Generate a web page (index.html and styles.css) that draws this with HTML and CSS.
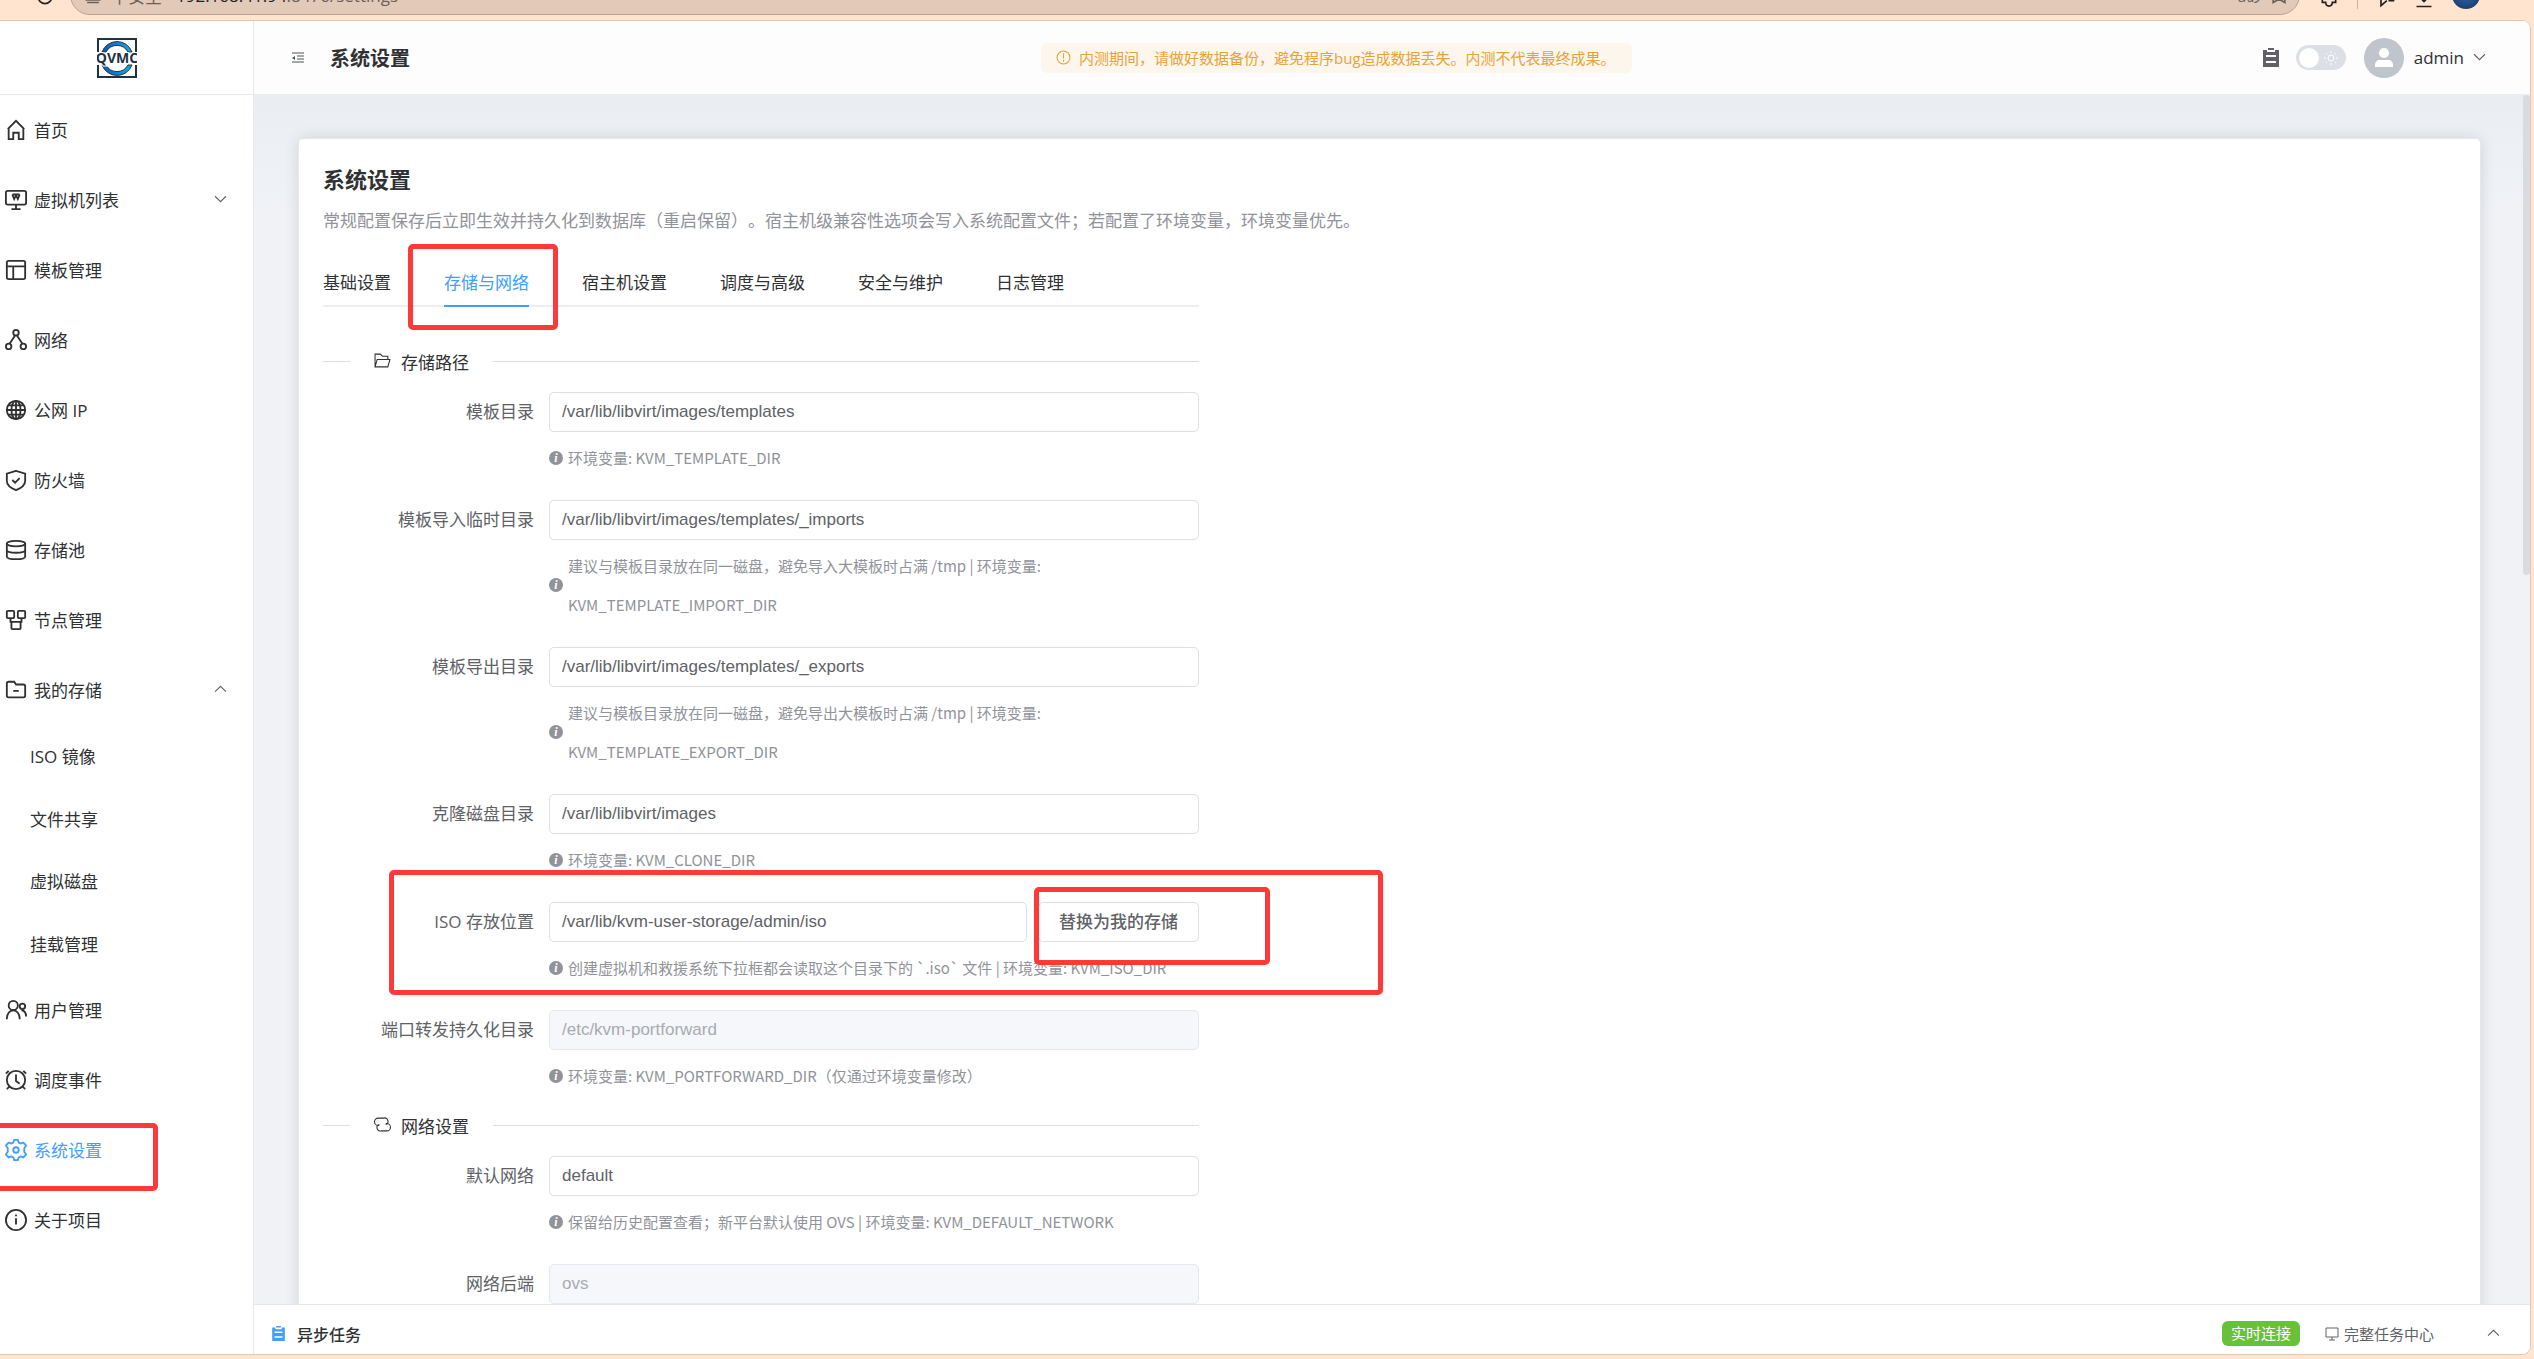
FILE: index.html
```html
<!DOCTYPE html>
<html lang="zh-CN">
<head>
    <meta charset="UTF-8">
    <title>系统设置</title>
    <link rel="stylesheet" href="styles.css">
</head>
<body>
    <div class="browser-bar">
        <svg class="bar-icon reload" viewBox="0 0 24 24"><circle cx="12" cy="12" r="8"/></svg>
        <div class="address">
            <svg class="bar-icon warn" viewBox="0 0 24 24"><path d="M3 18h18M5 21h14"/></svg>
            <span class="unsafe">不安全</span>
            <span class="url">192.168.41.94<span class="path">:8476/settings</span></span>
            <span class="aloud">aあ</span>
            <svg class="bar-icon star" viewBox="0 0 24 24"><path d="M5 9v12l7-4 7 4V9"/></svg>
        </div>
        <div class="bar-tools">
            <svg class="bar-icon" viewBox="0 0 24 24"><path d="M4 8v8h4c0 6 8 6 8 0h4V8"/></svg>
            <span class="bar-line"></span>
            <svg class="bar-icon" viewBox="0 0 24 24"><path d="M6 8v12l7-6M15 14h7"/></svg>
            <svg class="bar-icon" viewBox="0 0 24 24"><path d="M12 3v12M8 11l4 4 4-4M3 21h18"/></svg>
            <span class="profile-pic"></span>
        </div>
    </div>

    <div class="app">
        <aside class="sidebar">
            <div class="logo">
                <svg viewBox="0 0 40 40" width="40" height="40">
                    <defs>
                        <linearGradient id="ring" x1="0" x2="1"><stop offset="0" stop-color="#0a56bd"/><stop offset="1" stop-color="#0bb0f0"/></linearGradient>
                    </defs>
                    <path d="M1 14V1h38v13M1 27v12h38V27" fill="none" stroke="#1d3446" stroke-width="2"/>
                    <path d="M5 14A16 16 0 0 1 35 14L31 14A12.500 12.500 0 0 0 9 14zM5 27A16 16 0 0 0 35 27L31 27A12.500 12.500 0 0 1 9 27z" fill="url(#ring)"/>
                    <text x="20" y="25" text-anchor="middle" class="logo-text">QVMC</text>
                </svg>
            </div>
            <nav class="menu">
                <a class="menu-item" href="#">
                    <svg class="icon" viewBox="0 0 24 24"><path d="M3 11 12 2l9 9M4 10v12h5v-7h6v7h5V10"/></svg>首页
                </a>
                <a class="menu-item" href="#">
                    <svg class="icon" viewBox="0 0 24 24"><rect x="1" y="2" width="22" height="15" rx="2"/><path d="M12 17v5M7 22h10M8 6l2 5 2-4 2 4 2-5M8 6h8"/></svg>虚拟机列表
                    <svg class="arrow" viewBox="0 0 12 12"><path d="M1 3l5 5 5-5"/></svg>
                </a>
                <a class="menu-item" href="#">
                    <svg class="icon" viewBox="0 0 24 24"><rect x="2" y="2" width="20" height="20" rx="2"/><path d="M2 8h20M9 8v14"/></svg>模板管理
                </a>
                <a class="menu-item" href="#">
                    <svg class="icon" viewBox="0 0 24 24"><circle cx="12" cy="4" r="3"/><circle cx="4" cy="19" r="3"/><circle cx="20" cy="19" r="3"/><path d="M11 7 5 16M13 7l6 9"/></svg>网络
                </a>
                <a class="menu-item" href="#">
                    <svg class="icon" viewBox="0 0 24 24"><circle cx="12" cy="12" r="10"/><ellipse cx="12" cy="12" rx="5" ry="10"/><path d="M12 2v20M2 12h20M4 7h16M4 17h16"/></svg>公网 IP
                </a>
                <a class="menu-item" href="#">
                    <svg class="icon" viewBox="0 0 24 24"><path d="M12 2 2 5v8c0 5 5 8 10 10 5-2 10-5 10-10V5zM8 12l3 3 5-5"/></svg>防火墙
                </a>
                <a class="menu-item" href="#">
                    <svg class="icon" viewBox="0 0 24 24"><ellipse cx="12" cy="5" rx="10" ry="3"/><path d="M2 5v14c0 4 20 4 20 0V5M2 12c0 4 20 4 20 0"/></svg>存储池
                </a>
                <a class="menu-item" href="#">
                    <svg class="icon" viewBox="0 0 24 24"><rect x="2" y="2" width="8" height="8" rx="1"/><rect x="14" y="2" width="8" height="8" rx="1"/><rect x="7" y="14" width="10" height="8" rx="1"/><path d="M6 10v4h2M18 10v4h-2"/></svg>节点管理
                </a>
                <a class="menu-item" href="#">
                    <svg class="icon" viewBox="0 0 24 24"><path d="M2 5q0-2 2-2h6l2 3h8q2 0 2 2v10q0 2-2 2H4q-2 0-2-2zM9 13h6"/></svg>我的存储
                    <svg class="arrow" viewBox="0 0 12 12"><path d="M1 8l5-5 5 5"/></svg>
                </a>
                <div class="submenu">
                    <a href="#">ISO 镜像</a>
                    <a href="#">文件共享</a>
                    <a href="#">虚拟磁盘</a>
                    <a href="#">挂载管理</a>
                </div>
                <a class="menu-item" href="#">
                    <svg class="icon" viewBox="0 0 24 24"><circle cx="9" cy="7" r="5"/><path d="M2 22c0-13 14-13 14 0"/><circle cx="19" cy="8" r="3"/><path d="M18 12c4 1 5 4 5 7"/></svg>用户管理
                </a>
                <a class="menu-item" href="#">
                    <svg class="icon" viewBox="0 0 24 24"><circle cx="12" cy="12" r="10"/><path d="M12 6v7l4 3M1 5l3-3M23 5l-3-3M2 22l3-3M22 22l-3-3"/></svg>调度事件
                </a>
                <a class="menu-item active" href="#">
                    <svg class="icon" viewBox="0 0 24 24"><path d="M10 1h4l1 3 2 1 3-1 3 3-2 3v4l2 3-3 3-3-1-2 1-1 3h-4l-1-3-2-1-3 1-3-3 2-3v-4L1 7l3-3 3 1 2-1z"/><circle cx="12" cy="12" r="3"/></svg>系统设置
                </a>
                <a class="menu-item" href="#">
                    <svg class="icon" viewBox="0 0 24 24"><circle cx="12" cy="12" r="11"/><path d="M12 10v7M12 6v2"/></svg>关于项目
                </a>
            </nav>
        </aside>

        <div class="content">
            <header class="header">
                <svg class="fold" viewBox="0 0 12 12"><path d="M0 1h12M5 4h7M5 7h7M0 10h12"/><path class="solid" d="M0 6l3-2v4z"/></svg>
                <h1>系统设置</h1>
                <div class="notice">
                    <svg viewBox="0 0 14 14"><circle cx="7" cy="7" r="6"/><path d="M7 3v5M7 9v2"/></svg>
                    内测期间，请做好数据备份，避免程序bug造成数据丢失。内测不代表最终成果。
                </div>
                <div class="user-tools">
                    <svg class="clip" viewBox="0 0 16 19"><path d="M0 2h4v2h8V2h4v17H0zM5 0h6v2H5z"/><path class="lines" d="M3 8h10M3 14h10"/></svg>
                    <label class="switch">
                        <input type="checkbox" aria-label="深色模式">
                        <svg viewBox="0 0 14 14"><circle cx="7" cy="7" r="3"/><path d="M7 0v2M7 12v2M0 7h2M12 7h2M2 2l1 1M11 11l1 1M2 12l1-1M11 3l1-1"/></svg>
                    </label>
                    <span class="avatar">
                        <svg viewBox="0 0 18 20"><circle cx="9" cy="5" r="5"/><path d="M0 19v-2c0-3 2-5 5-5h8c3 0 5 2 5 5v2z"/></svg>
                    </span>
                    <button class="user-name">admin
                        <svg class="arrow" viewBox="0 0 12 12"><path d="M1 3l5 5 5-5"/></svg>
                    </button>
                </div>
            </header>

            <main class="main">
                <section class="card">
                    <h2>系统设置</h2>
                    <p class="desc">常规配置保存后立即生效并持久化到数据库（重启保留）。宿主机级兼容性选项会写入系统配置文件；若配置了环境变量，环境变量优先。</p>

                    <div class="form">
                        <div class="tabs">
                            <button>基础设置</button>
                            <button class="active">存储与网络</button>
                            <button>宿主机设置</button>
                            <button>调度与高级</button>
                            <button>安全与维护</button>
                            <button>日志管理</button>
                        </div>

                        <div class="divider">
                            <span class="divider-title">
                                <svg viewBox="0 0 16 16"><path d="M1 14V2h5l2 2h5v3M1 14l2-7h12l-2 7z"/></svg>存储路径
                            </span>
                        </div>

                        <div class="row">
                            <label for="tpl">模板目录</label>
                            <div class="field">
                                <input type="text" id="tpl" value="/var/lib/libvirt/images/templates">
                                <div class="hint"><i>i</i><span>环境变量: KVM_TEMPLATE_DIR</span></div>
                            </div>
                        </div>
                        <div class="row">
                            <label for="imports">模板导入临时目录</label>
                            <div class="field">
                                <input type="text" id="imports" value="/var/lib/libvirt/images/templates/_imports">
                                <div class="hint"><i>i</i><span>建议与模板目录放在同一磁盘，避免导入大模板时占满 /tmp | 环境变量: KVM_TEMPLATE_IMPORT_DIR</span></div>
                            </div>
                        </div>
                        <div class="row">
                            <label for="exports">模板导出目录</label>
                            <div class="field">
                                <input type="text" id="exports" value="/var/lib/libvirt/images/templates/_exports">
                                <div class="hint"><i>i</i><span>建议与模板目录放在同一磁盘，避免导出大模板时占满 /tmp | 环境变量: KVM_TEMPLATE_EXPORT_DIR</span></div>
                            </div>
                        </div>
                        <div class="row">
                            <label for="clone">克隆磁盘目录</label>
                            <div class="field">
                                <input type="text" id="clone" value="/var/lib/libvirt/images">
                                <div class="hint"><i>i</i><span>环境变量: KVM_CLONE_DIR</span></div>
                            </div>
                        </div>
                        <div class="row">
                            <label for="iso">ISO 存放位置</label>
                            <div class="field">
                                <div class="input-group">
                                    <input type="text" id="iso" value="/var/lib/kvm-user-storage/admin/iso">
                                    <button class="replace-btn">替换为我的存储</button>
                                </div>
                                <div class="hint"><i>i</i><span>创建虚拟机和救援系统下拉框都会读取这个目录下的 `.iso` 文件 | 环境变量: KVM_ISO_DIR</span></div>
                            </div>
                        </div>
                        <div class="row">
                            <label for="forward">端口转发持久化目录</label>
                            <div class="field">
                                <input type="text" id="forward" value="/etc/kvm-portforward" disabled>
                                <div class="hint"><i>i</i><span>环境变量: KVM_PORTFORWARD_DIR（仅通过环境变量修改）</span></div>
                            </div>
                        </div>

                        <div class="divider">
                            <span class="divider-title">
                                <svg viewBox="0 0 16 16"><path d="M5 9H4a3 3 0 0 1 0-7h5a3 3 0 0 1 2 6M11 7h1a3 3 0 0 1 0 7H7a3 3 0 0 1-2-6"/></svg>网络设置
                            </span>
                        </div>

                        <div class="row">
                            <label for="net">默认网络</label>
                            <div class="field">
                                <input type="text" id="net" value="default">
                                <div class="hint"><i>i</i><span>保留给历史配置查看；新平台默认使用 OVS | 环境变量: KVM_DEFAULT_NETWORK</span></div>
                            </div>
                        </div>
                        <div class="row">
                            <label for="backend">网络后端</label>
                            <div class="field">
                                <input type="text" id="backend" value="ovs" disabled>
                            </div>
                        </div>
                    </div>
                </section>
                <div class="scroll-thumb"></div>
            </main>

            <footer class="task-bar">
                <svg class="task-icon" viewBox="0 0 16 19"><path d="M0 2h4v2h8V2h4v17H0zM5 0h6v2H5z"/><path class="lines" d="M3 8h10M3 14h10"/></svg>
                <strong>异步任务</strong>
                <span class="live">实时连接</span>
                <a class="task-center" href="#">
                    <svg viewBox="0 0 14 14"><path d="M1 1h12v9H1zM7 10v3M4 13h6"/></svg>完整任务中心
                </a>
                <svg class="arrow" viewBox="0 0 12 12"><path d="M1 8l5-5 5 5"/></svg>
            </footer>
        </div>
    </div>

    <!-- highlight marks -->
    <div class="mark mark-tab"></div>
    <div class="mark mark-iso"></div>
    <div class="mark mark-button"></div>
    <div class="mark mark-menu"></div>
</body>
</html>
```
FILE: styles.css
```css
* {
    box-sizing: border-box;
}

body {
    margin: 0;
    height: 100vh;
    display: flex;
    flex-direction: column;
    position: relative;
    overflow: hidden;
    background: #ffe5d0;
    color: #303133;
    font-family: "Open Sans", "Noto Sans CJK SC", sans-serif;
    font-size: 17px;
    text-spacing-trim: space-all;
}

a {
    color: inherit;
    text-decoration: none;
}

button {
    font: inherit;
    color: inherit;
    cursor: pointer;
}

svg {
    flex-shrink: 0;
    fill: none;
    stroke: currentColor;
}

h1, h2, p {
    margin: 0;
}

/* browser bar, only its lower edge is visible */
.browser-bar {
    height: 20px;
    flex-shrink: 0;
    display: flex;
    align-items: flex-end;
    padding: 0 54px 5px 35px;
    overflow: hidden;
    color: #222;
}

.bar-icon {
    width: 20px;
    height: 20px;
    stroke-width: 2;
}

.reload {
    margin-bottom: 8px;
}

.address {
    flex: 1;
    height: 40px;
    display: flex;
    align-items: center;
    gap: 8px;
    margin-left: 15px;
    padding: 0 10px 0 12px;
    border: 1px solid #b9a295;
    border-radius: 20px;
    background: #e3c9b8;
    color: #6b5f58;
}

.url {
    margin-left: 6px;
    color: #222;
}

.path {
    color: #6b5f58;
}

.aloud {
    margin-left: auto;
    font-size: 15px;
}

.bar-tools {
    display: flex;
    align-items: flex-end;
    gap: 18px;
    height: 40px;
    padding-left: 19px;
    padding-bottom: 6px;
}

.bar-line {
    width: 1px;
    height: 20px;
    background: #c9b3a4;
}

.profile-pic {
    width: 28px;
    height: 28px;
    border-radius: 50%;
    background: radial-gradient(#2f64a8, #16305c);
}

.app {
    flex: 1;
    min-height: 0;
    display: flex;
    margin: 0 3px 4px 0;
    border: 1px solid #e6c7ab;
    border-left: none;
    border-radius: 0 9px 9px 0;
    overflow: hidden;
    background: #fff;
}

/* sidebar */
.sidebar {
    width: 254px;
    flex-shrink: 0;
    border-right: 1px solid #e4e7ed;
}

.logo {
    height: 74px;
    display: flex;
    align-items: center;
    padding-left: 97px;
    border-bottom: 1px solid #e8eaf0;
}

.logo-text {
    font-size: 14px;
    font-weight: 700;
    fill: #1d3446;
    stroke: #fff;
    stroke-width: 2;
    paint-order: stroke;
}

.menu-item {
    height: 70px;
    display: flex;
    align-items: center;
    gap: 7px;
    padding: 0 26px 1px 5px;
}

.icon {
    width: 22px;
    height: 22px;
    stroke-width: 2;
}

.arrow {
    width: 13px;
    height: 13px;
    margin-left: auto;
    color: #606266;
}

.submenu {
    height: 250px;
    display: grid;
}

.submenu a {
    display: flex;
    align-items: center;
    padding: 0 0 1px 30px;
}

.active {
    color: #409eff;
}

/* header */
.content {
    flex: 1;
    min-width: 0;
    display: flex;
    flex-direction: column;
}

.header {
    height: 73px;
    flex-shrink: 0;
    display: flex;
    align-items: center;
    justify-content: space-between;
    padding: 0 44px 0 38px;
    background: #fdfdfd;
}

.fold {
    width: 12px;
    height: 12px;
    color: #505256;
}

.solid {
    fill: currentColor;
    stroke: none;
}

.header h1 {
    margin-right: auto;
    padding-left: 26px;
    font-size: 20px;
    font-weight: 700;
}

.notice {
    display: flex;
    align-items: center;
    gap: 8px;
    height: 30px;
    padding: 0 16px 0 15px;
    border-radius: 6px;
    background: #fdf6ec;
    color: #e6a23c;
    font-size: 15px;
}

.notice svg {
    width: 15px;
    height: 15px;
}

.user-tools {
    display: flex;
    align-items: center;
    margin-left: auto;
}

.clip {
    width: 16px;
    height: 19px;
    margin-right: 17px;
    color: #606266;
}

.clip, .task-icon {
    fill: currentColor;
    stroke: none;
}

.lines {
    stroke: #fff;
    stroke-width: 2;
}

.switch {
    width: 50px;
    height: 25px;
    display: flex;
    align-items: center;
    justify-content: space-between;
    margin-right: 18px;
    padding: 0 8px 0 3px;
    border-radius: 13px;
    background: #dcdfe6;
    color: #fff;
}

.switch input {
    appearance: none;
    width: 20px;
    height: 20px;
    margin: 0;
    border-radius: 50%;
    background: #fff;
}

.switch svg {
    width: 14px;
    height: 14px;
}

.avatar {
    width: 40px;
    height: 40px;
    display: flex;
    align-items: center;
    justify-content: center;
    margin-right: 10px;
    border-radius: 50%;
    background: #c0c4cc;
}

.avatar svg {
    width: 18px;
    height: 20px;
    fill: #fff;
    stroke: none;
}

.user-name {
    display: flex;
    align-items: center;
    gap: 9px;
    padding: 0;
    border: none;
    background: none;
    font-weight: 500;
}

/* settings card */
.main {
    flex: 1;
    min-height: 0;
    position: relative;
    overflow: hidden;
    padding: 44px 49px 0 44px;
    background: linear-gradient(#eaeef3, #f0f2f6 120px);
}

.card {
    min-height: 1300px;
    padding: 24px;
    border: 1px solid #e4e7ed;
    border-radius: 5px;
    background: #fff;
    box-shadow: 0 0 15px rgba(0, 0, 0, 0.12);
}

.card h2 {
    font-size: 22px;
    line-height: 32px;
}

.desc {
    margin-top: 13px;
    line-height: 26px;
    color: #909399;
}

.form {
    width: 876px;
}

.tabs {
    display: flex;
    gap: 53px;
    margin-top: 23px;
    margin-bottom: 54px;
    border-bottom: 2px solid #eceef4;
}

.tabs button {
    height: 50px;
    margin-bottom: -2px;
    padding: 0;
    border: none;
    border-bottom: 2px solid transparent;
    background: none;
}

.tabs .active {
    border-bottom-color: #409eff;
}

.divider {
    height: 1px;
    display: flex;
    align-items: center;
    gap: 24px;
    margin: 30px 0;
}

.divider::before, .divider::after {
    content: "";
    width: 27px;
    height: 1px;
    background: #dcdfe6;
}

.divider::after {
    flex: 1;
}

.divider-title {
    display: flex;
    align-items: center;
    gap: 10px;
}

.divider-title svg {
    width: 17px;
    height: 17px;
    margin-bottom: 3px;
}

.row {
    display: flex;
    gap: 15px;
    margin-bottom: 23px;
}

.row label {
    width: 211px;
    line-height: 40px;
    text-align: right;
    color: #606266;
}

.field {
    flex: 1;
}

.field input {
    display: block;
    width: 100%;
    height: 40px;
    padding: 0 12px;
    border: 1px solid #dcdfe6;
    border-radius: 5px;
    background: #fff;
    color: #606266;
    font-family: "Liberation Sans", Arial, sans-serif;
    font-size: 17px;
}

.field input:disabled {
    border-color: #e4e7ed;
    background: #f5f7fa;
    color: #a8abb2;
}

.input-group {
    display: flex;
    gap: 11px;
}

.input-group input {
    flex: 1;
}

.replace-btn {
    height: 40px;
    padding: 0 20px 3px;
    border: 1px solid #dcdfe6;
    border-radius: 5px;
    background: #fff;
    color: #606266;
    font-weight: 500;
}

.hint {
    display: flex;
    align-items: center;
    gap: 5px;
    margin-top: 6px;
    font-family: "Noto Sans CJK SC", sans-serif;
    font-size: 15px;
    line-height: 39px;
    color: #909399;
}

.hint i {
    flex-shrink: 0;
    width: 14px;
    height: 14px;
    border-radius: 50%;
    background: #909399;
    color: #fff;
    font-family: "Liberation Serif", serif;
    font-size: 12px;
    font-weight: 700;
    line-height: 14px;
    text-align: center;
}

.scroll-thumb {
    position: absolute;
    top: 1px;
    right: 0;
    width: 7px;
    height: 480px;
    border-radius: 4px;
    background: #d9dbdf;
}

/* bottom task bar */
.task-bar {
    height: 50px;
    flex-shrink: 0;
    display: flex;
    align-items: center;
    padding: 8px 30px 0 18px;
    border-top: 1px solid #e4e7ed;
    background: #fff;
}

.task-icon {
    width: 13px;
    height: 15px;
    margin-right: 12px;
    color: #409eff;
}

.task-bar strong {
    font-size: 16px;
    font-weight: 500;
}

.live {
    margin-left: auto;
    padding: 0 9px;
    border-radius: 6px;
    background: #67c23a;
    color: #fff;
    font-size: 15px;
    line-height: 25px;
}

.task-center {
    display: flex;
    align-items: center;
    gap: 5px;
    margin-left: 25px;
    color: #606266;
    font-size: 15px;
}

.task-center svg {
    width: 14px;
    height: 14px;
}

.task-bar .arrow {
    margin-left: 53px;
}

.mark {
    position: absolute;
    border: 5px solid #ff3838;
    border-radius: 5px;
}

.mark-tab {
    left: 408px;
    top: 244px;
    width: 150px;
    height: 86px;
}

.mark-iso {
    left: 389px;
    top: 870px;
    width: 994px;
    height: 125px;
}

.mark-button {
    left: 1034px;
    top: 887px;
    width: 236px;
    height: 78px;
}

.mark-menu {
    left: -5px;
    top: 1123px;
    width: 163px;
    height: 68px;
}
```
